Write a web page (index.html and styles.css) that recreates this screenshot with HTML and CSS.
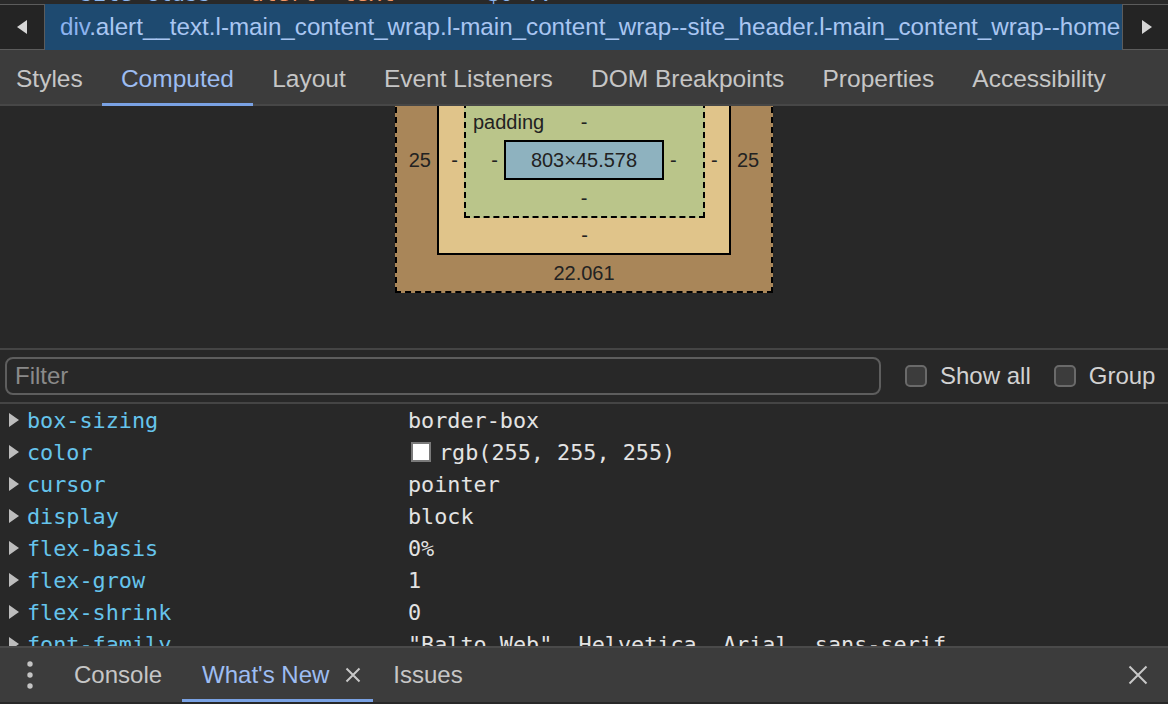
FILE: index.html
```html
<!DOCTYPE html>
<html>
<head>
<meta charset="utf-8">
<link rel="stylesheet" href="styles.css">
</head>
<body>
<div class="app">
  <div class="clip-strip"><div class="clip-line"><span class="c-blue">site</span> <span class="c-blue">class</span>  <span class="c-orange">"alert__text "</span>  <span class="c-grey">==</span> <span class="c-blue">$0 ..</span></div></div>

  <div class="crumbs">
    <div class="crumb-btn left"><svg width="10" height="14" viewBox="0 0 10 14"><path d="M10 0 L0 7 L10 14 Z" fill="#d6d6d6"/></svg></div>
    <div class="crumb-track"><span class="crumb-tag">div</span>.alert__text.l-main_content_wrap.l-main_content_wrap--site_header.l-main_content_wrap--home</div>
    <div class="crumb-btn right"><svg width="10" height="14" viewBox="0 0 10 14"><path d="M0 0 L10 7 L0 14 Z" fill="#d6d6d6"/></svg></div>
  </div>

  <div class="tabs">
    <div class="tab">Styles</div>
    <div class="tab active">Computed</div>
    <div class="tab">Layout</div>
    <div class="tab">Event Listeners</div>
    <div class="tab">DOM Breakpoints</div>
    <div class="tab">Properties</div>
    <div class="tab">Accessibility</div>
  </div>

  <div class="metrics">
    <div class="bm bm-margin">
      <span class="bm-name">margin</span>
      <div class="bm-top">-</div>
      <div class="bm-left">25</div>
      <div class="bm bm-border">
        <span class="bm-name">border</span>
        <div class="bm-top">-</div>
        <div class="bm-left">-</div>
        <div class="bm bm-padding">
          <span class="bm-name">padding</span>
          <div class="bm-top">-</div>
          <div class="bm-left">-</div>
          <div class="bm-content">803×45.578</div>
          <div class="bm-right">-</div>
          <div class="bm-bottom">-</div>
        </div>
        <div class="bm-right">-</div>
        <div class="bm-bottom">-</div>
      </div>
      <div class="bm-right">25</div>
      <div class="bm-bottom">22.061</div>
    </div>
  </div>

  <div class="filterbar">
    <div class="filter">Filter</div>
    <label class="check"><span class="check-box"></span>Show all</label>
    <label class="check"><span class="check-box"></span>Group</label>
  </div>

  <div class="props">
    <div class="prop"><svg class="tri" width="10" height="14" viewBox="0 0 10 14"><path d="M0 0 L10 7 L0 14 Z"/></svg><span class="pname">box-sizing</span><span class="pval">border-box</span></div>
    <div class="prop"><svg class="tri" width="10" height="14" viewBox="0 0 10 14"><path d="M0 0 L10 7 L0 14 Z"/></svg><span class="pname">color</span><span class="pval"><span class="swatch"></span>rgb(255, 255, 255)</span></div>
    <div class="prop"><svg class="tri" width="10" height="14" viewBox="0 0 10 14"><path d="M0 0 L10 7 L0 14 Z"/></svg><span class="pname">cursor</span><span class="pval">pointer</span></div>
    <div class="prop"><svg class="tri" width="10" height="14" viewBox="0 0 10 14"><path d="M0 0 L10 7 L0 14 Z"/></svg><span class="pname">display</span><span class="pval">block</span></div>
    <div class="prop"><svg class="tri" width="10" height="14" viewBox="0 0 10 14"><path d="M0 0 L10 7 L0 14 Z"/></svg><span class="pname">flex-basis</span><span class="pval">0%</span></div>
    <div class="prop"><svg class="tri" width="10" height="14" viewBox="0 0 10 14"><path d="M0 0 L10 7 L0 14 Z"/></svg><span class="pname">flex-grow</span><span class="pval">1</span></div>
    <div class="prop"><svg class="tri" width="10" height="14" viewBox="0 0 10 14"><path d="M0 0 L10 7 L0 14 Z"/></svg><span class="pname">flex-shrink</span><span class="pval">0</span></div>
    <div class="prop"><svg class="tri" width="10" height="14" viewBox="0 0 10 14"><path d="M0 0 L10 7 L0 14 Z"/></svg><span class="pname">font-family</span><span class="pval">"Balto Web", Helvetica, Arial, sans-serif</span></div>
  </div>

  <div class="drawer">
    <div class="drawer-menu"><svg width="6" height="28" viewBox="0 0 6 28"><circle cx="3" cy="3" r="2.7"/><circle cx="3" cy="14" r="2.7"/><circle cx="3" cy="25" r="2.7"/></svg></div>
    <div class="dtab">Console</div>
    <div class="dtab active">What's New<svg class="dtab-x" width="16" height="16" viewBox="0 0 16 16"><path d="M1.5 1.5 L14.5 14.5 M14.5 1.5 L1.5 14.5"/></svg></div>
    <div class="dtab">Issues</div>
    <div class="drawer-close"><svg width="20" height="20" viewBox="0 0 20 20"><path d="M1.5 1.5 L18.5 18.5 M18.5 1.5 L1.5 18.5"/></svg></div>
  </div>
</div>
</body>
</html>
```

FILE: styles.css
```css
html, body {
  margin: 0;
  padding: 0;
}
body {
  background: #282828;
  font-family: "Liberation Sans", Arial, sans-serif;
}
.app {
  width: 1168px;
  height: 704px;
  display: flex;
  flex-direction: column;
  overflow: hidden;
}

/* clipped line of the elements panel above */
.clip-strip {
  flex: none;
  height: 4px;
  overflow: hidden;
  background: #292929;
}
.clip-line {
  margin-top: -18px;
  padding-left: 80px;
  font-family: "DejaVu Sans Mono", monospace;
  font-size: 21.8px;
  line-height: 24px;
  white-space: pre;
}
.c-blue { color: #8fb8f0; }
.c-orange { color: #f29766; }
.c-grey { color: #9a9a9a; }

/* breadcrumbs */
.crumbs {
  flex: none;
  height: 46px;
  display: flex;
  background: #3c3c3c;
}
.crumb-btn {
  flex: none;
  width: 45px;
  box-sizing: border-box;
  background: #242424;
  border: 1px solid #5c5c5c;
  display: flex;
  align-items: center;
  justify-content: center;
}
.crumb-btn.left { border-left: none; padding-left: 0; }
.crumb-btn.right { border-right: none; width: 46px; padding-left: 2px; }
.crumb-track {
  flex: 1;
  min-width: 0;
  background: #1e4a70;
  color: #a9c6f2;
  font-size: 24.2px;
  line-height: 46px;
  white-space: nowrap;
  overflow: hidden;
  padding-left: 15px;
}
.crumb-tag { color: #8cb3ef; }

/* sidebar tabs */
.tabs {
  flex: none;
  height: 56px;
  box-sizing: border-box;
  padding-top: 2px;
  display: flex;
  background: #3c3c3c;
  box-shadow: inset 0 -2px 0 #474747;
}
.tab {
  padding: 0 19.1px;
  display: flex;
  align-items: center;
  font-size: 24.5px;
  color: #c6c6c6;
}
.tab:first-child { padding-left: 16px; }
.tab.active {
  color: #9dbdf2;
  box-shadow: inset 0 -3px 0 #7aa2e4;
}

/* box model */
.metrics {
  flex: none;
  height: 242px;
  overflow: hidden;
  display: flex;
  justify-content: center;
  align-items: flex-start;
  border-bottom: 2px solid #454545;
}
.bm {
  position: relative;
  display: grid;
  box-sizing: border-box;
  grid-template-areas:
    ". top ."
    "left inner right"
    ". bot .";
  font-size: 20px;
  color: #222;
}
.bm-margin {
  margin-top: -79px;
  grid-template-columns: 40px 294px 40px;
  grid-template-rows: 36px auto 36px;
  border: 2px dashed #000;
  background: #a98659;
}
.bm-border {
  grid-area: inner;
  grid-template-columns: 25px 241px 24px;
  grid-template-rows: 35px auto 35px;
  border: 2px solid #000;
  background: #e0c48a;
}
.bm-padding {
  grid-area: inner;
  grid-template-columns: 38px 160px 39px;
  grid-template-rows: 36px auto 36px;
  border: 2px dashed #000;
  background: #bac58a;
}
.bm-content {
  grid-area: inner;
  width: 160px;
  height: 40px;
  box-sizing: border-box;
  border: 2px solid #000;
  background: #8eb2bf;
  display: flex;
  align-items: center;
  justify-content: center;
}
.bm-top, .bm-bottom, .bm-left, .bm-right {
  display: flex;
  align-items: center;
  justify-content: center;
}
.bm-top { grid-area: top; }
.bm-bottom { grid-area: bot; }
.bm-left { grid-area: left; justify-content: flex-end; padding-right: 6px; }
.bm-right { grid-area: right; justify-content: flex-start; padding-left: 6px; }
.bm-name {
  position: absolute;
  left: 7px;
  top: 8px;
  line-height: 20px;
}

/* filter toolbar */
.filterbar {
  flex: none;
  height: 52px;
  display: flex;
  align-items: center;
  padding-left: 5px;
  border-bottom: 2px solid #454545;
}
.filter {
  width: 876px;
  height: 38px;
  box-sizing: border-box;
  border: 2px solid #5e5e5e;
  border-radius: 8px;
  padding-left: 8px;
  display: flex;
  align-items: center;
  color: #8a8a8a;
  font-size: 24px;
}
.check {
  display: flex;
  align-items: center;
  margin-left: 24px;
  font-size: 24px;
  color: #d2d2d2;
}
.check + .check { margin-left: 23px; }
.check-box {
  width: 22px;
  height: 22px;
  box-sizing: border-box;
  border: 2px solid #6a6a6a;
  border-radius: 5px;
  background: #3c3c3c;
  margin-right: 13px;
}

/* computed property list */
.props {
  flex: 1;
  min-height: 0;
  overflow: hidden;
  font-family: "DejaVu Sans Mono", "Liberation Mono", monospace;
  font-size: 21.8px;
}
.prop {
  height: 32px;
  display: flex;
  align-items: center;
  padding-left: 9px;
  white-space: pre;
}
.tri {
  flex: none;
  fill: #bdbdbd;
  margin-right: 8px;
}
.pname {
  flex: none;
  width: 381px;
  color: #66c4ec;
}
.pval {
  display: flex;
  align-items: center;
  color: #e3e3e3;
}
.swatch {
  width: 20px;
  height: 20px;
  box-sizing: border-box;
  border: 2px solid #7a7a7a;
  background: #fff;
  margin-left: 3px;
  margin-right: 8px;
}

/* drawer */
.drawer {
  flex: none;
  height: 58px;
  box-sizing: border-box;
  border-top: 2px solid #4a4a4a;
  border-bottom: 2px solid #282828;
  background: #3c3c3c;
  display: flex;
  align-items: stretch;
}
.drawer-menu {
  width: 54px;
  box-sizing: border-box;
  padding-left: 6px;
  display: flex;
  align-items: center;
  justify-content: center;
  fill: #c4c4c4;
}
.dtab {
  display: flex;
  align-items: center;
  padding: 0 20px;
  font-size: 24px;
  color: #c6c6c6;
}
.dtab.active {
  color: #9dbdf2;
  padding-right: 12px;
  box-shadow: inset 0 -3px 0 #7aa2e4;
}
.dtab-x {
  margin-left: 16px;
  stroke: #c8c8c8;
  stroke-width: 2;
}
.drawer-close {
  margin-left: auto;
  margin-right: 20px;
  display: flex;
  align-items: center;
  stroke: #c8c8c8;
  stroke-width: 2;
}
```
